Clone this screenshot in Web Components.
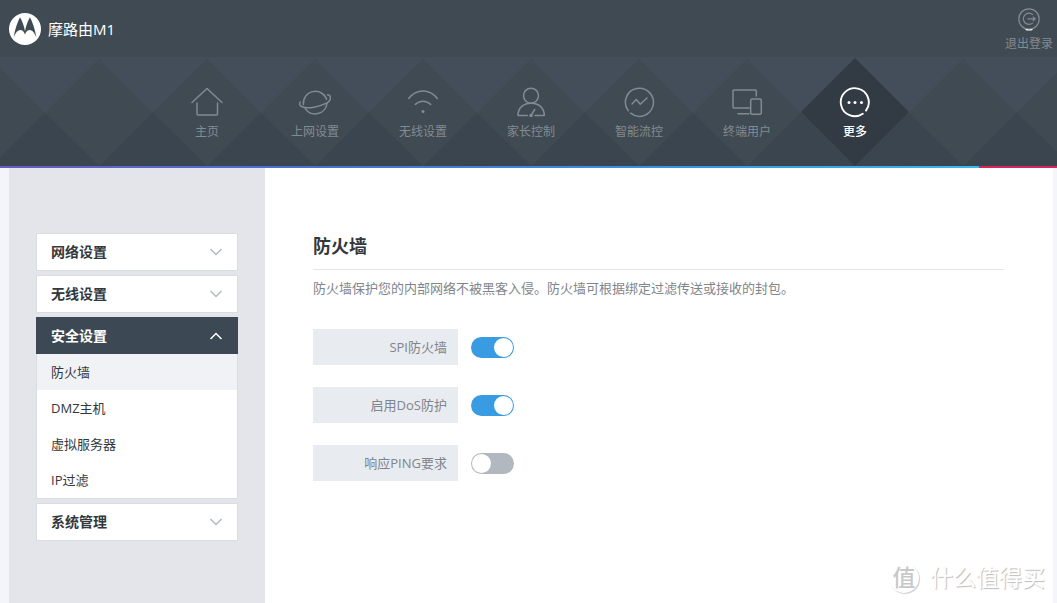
<!DOCTYPE html>
<html lang="zh-CN">
<head>
<meta charset="utf-8">
<meta name="viewport" content="width=device-width, initial-scale=1">
<title>摩路由M1</title>
<style>
  body {
    margin: 0;
    font: 13px/20px "Open Sans", "Noto Sans CJK SC", sans-serif;
    color: #33383d;
    background: #f4f5fa;
  }
</style>
</head>
<body>
<router-app>
  <app-header slot="header">摩路由M1</app-header>
  <main-nav slot="nav">
    <nav-item icon="home">主页</nav-item>
    <nav-item icon="planet">上网设置</nav-item>
    <nav-item icon="wifi">无线设置</nav-item>
    <nav-item icon="parent">家长控制</nav-item>
    <nav-item icon="flow">智能流控</nav-item>
    <nav-item icon="devices">终端用户</nav-item>
    <nav-item icon="more" active>更多</nav-item>
  </main-nav>
  <side-section slot="side" heading="网络设置"></side-section>
  <side-section slot="side" heading="无线设置"></side-section>
  <side-section slot="side" heading="安全设置" open>
    <side-link active>防火墙</side-link>
    <side-link>DMZ主机</side-link>
    <side-link>虚拟服务器</side-link>
    <side-link>IP过滤</side-link>
  </side-section>
  <side-section slot="side" heading="系统管理"></side-section>
  <settings-panel heading="防火墙">
    <span slot="description">防火墙保护您的内部网络不被黑客入侵。防火墙可根据绑定过滤传送或接收的封包。</span>
    <toggle-row checked>SPI防火墙</toggle-row>
    <toggle-row checked>启用DoS防护</toggle-row>
    <toggle-row>响应PING要求</toggle-row>
  </settings-panel>
  <site-mark slot="mark">什么值得买</site-mark>
</router-app>

<script>
const define = (name, render) => customElements.define(name, class extends HTMLElement {
  constructor() {
    super();
    this.attachShadow({ mode: "open" }).innerHTML = render(this);
  }
});

const icons = {
  home: `<path d="M1 16.5 16 2.5l15 14M6 17v11q0 1 1 1h18.5q1 0 1-1V17"/>`,
  planet: `<path d="M4.400 18.600A12 12 0 0 1 27.600 13.200M6.200 22.600A12 12 0 0 0 28 17.500"/><path d="M1.200 16C.2 18.300.9 20 3 20.800c6.500 2.600 18-.4 24.500-3.600C31.500 15 32 12.500 31 10c-.5-1-1.500-1.200-2.500-1.200"/>`,
  wifi: `<path d="M1.700 12.500C9.500 2.500 22.500 2.500 30.300 12.500M8.300 18.500c4.400-4.500 11-4.500 15.400 0"/><circle cx="16" cy="25.500" r="1.500" fill="currentColor" stroke="none"/>`,
  parent: `<circle cx="16" cy="9.700" r="7.500"/><path d="M12.300 29.500H3C3 21.500 8.500 17.200 16 17.200s13.300 4.300 13.300 12.300H20M16 29.500l3.700-6"/><circle cx="16" cy="29.500" r="1.800" fill="currentColor" stroke="none"/>`,
  flow: `<path d="M5.200 24.700A14 14 0 1 1 7.600 27.200M9 18l4.300-4.500 4 4.800L24 12"/>`,
  devices: `<path d="M25.300 10V5q0-1-1-1H3Q2 4 2 5v16q0 1 1 1h15.300M7 27.700h11"/><rect x="19.700" y="13" width="10.600" height="15.300" rx="1.500"/>`,
  more: `<path stroke-width="1.900" d="M23.800 27.700A14 14 0 1 1 27 24.600"/><g fill="currentColor" stroke="none"><circle cx="10" cy="16.500" r="1.500"/><circle cx="16" cy="16.500" r="1.500"/><circle cx="22.500" cy="16.500" r="1.500"/></g>`
};

define("router-app", () => `
  <style>
    :host { display: flex; flex-direction: column; min-height: 100vh; position: relative; }
    .body { flex: 1; display: grid; grid-template-columns: 256px 1fr; margin: 0 4px 0 9px; background: #fff; }
    aside { display: flex; flex-direction: column; gap: 4px; padding: 65px 27px; background: #e4e5ea; }
    main { padding: 65px 49px 40px 48px; }
  </style>
  <slot name="header"></slot>
  <slot name="nav"></slot>
  <div class="body">
    <aside><slot name="side"></slot></aside>
    <main><slot></slot></main>
  </div>
  <slot name="mark"></slot>`);

define("app-header", () => `
  <style>
    :host { display: flex; justify-content: space-between; height: 57px; padding: 0 4px 0 9px; background: #404a53; color: #fff; }
    .brand { display: flex; align-items: center; gap: 7px; font-size: 15px; }
    .brand svg { width: 32px; height: 32px; }
    .logout { display: flex; flex-direction: column; align-items: center; gap: 5px; padding-top: 8px; color: #838b92; font-size: 12px; line-height: 16px; text-decoration: none; }
    .logout svg { width: 22px; height: 23px; }
  </style>
  <div class="brand">
    <svg viewBox="0 0 32 32" aria-hidden="true"><circle cx="16" cy="16" r="16" fill="#fff"/><path fill="#404a53" d="M4.700 24.300C6 16 8.500 9 11 4.300 13.300 8 15 13 16 18.300 17 13 18.700 8 21 4.300 23.500 9 26 16 27.300 24.300 25.500 19.500 23 17 20.800 17s-4.200 2-4.800 4.700C15.400 19 13.400 17 11.200 17S6.500 19.500 4.700 24.300Z"/></svg>
    <span><slot></slot></span>
  </div>
  <a class="logout" href="#logout">
    <svg viewBox="0 0 22 23" fill="none" stroke="currentColor" stroke-width="1.200" aria-hidden="true"><circle cx="11" cy="11" r="10.200"/><path d="M14.800 6.700A5.600 5.600 0 1 0 14.800 14.900M9.500 10.800h7.500M14.800 8.600l2.400 2.200-2.400 2.200"/><path stroke="#fff" d="M7.500 21.500q3.500 1 7 0"/></svg>
    退出登录
  </a>`);

define("main-nav", () => `
  <style>
    :host {
      display: block;
      border-bottom: 2px solid;
      border-image: linear-gradient(90deg, #685cc0, #4a72d0 30%, #3796e0 65%, #3fc0f0) 1;
      position: relative;
    }
    nav {
      display: flex; justify-content: center; height: 109px; padding-left: 5px;
      background: conic-gradient(from -45deg, #444e5a 90deg, #3f4a53 0 180deg, #3b4550 0 270deg, #3f4a53 0) calc(50% + 54px) 1px / 108px 108px repeat-x content-box border-box #444e5a;
    }
    .accent { position: absolute; right: 0; bottom: -2px; width: 78px; height: 2px; background: #d8235d; }
  </style>
  <nav><slot></slot></nav>
  <div class="accent"></div>`);

define("nav-item", el => `
  <style>
    :host { display: block; width: 108px; color: #838b92; }
    :host([active]) { color: #fff; }
    a { display: flex; flex-direction: column; align-items: center; gap: 6px; height: 108px; margin-top: 1px; padding-top: 28px; box-sizing: border-box; color: inherit; font-size: 12px; line-height: 16px; text-decoration: none; }
    :host([active]) a { background: #323a43; clip-path: polygon(50% 0, 100% 50%, 50% 100%, 0 50%); font-weight: 500; }
    svg { width: 32px; height: 32px; }
  </style>
  <a href="#${el.getAttribute("icon")}">
    <svg viewBox="0 0 32 32" fill="none" stroke="currentColor" stroke-width="1.500" stroke-linecap="round" stroke-linejoin="round" aria-hidden="true">${icons[el.getAttribute("icon")]}</svg>
    <span><slot></slot></span>
  </a>`);

define("side-section", el => `
  <style>
    :host { display: block; border: 1px solid #d9dce1; background: #fff; }
    :host([open]) { border-top: 0; }
    button { display: flex; align-items: center; justify-content: space-between; width: 100%; height: 36px; padding: 0 15px 0 14px; border: 0; background: none; font: bold 14px/20px "Open Sans", "Noto Sans CJK SC", sans-serif; color: #33383d; cursor: pointer; }
    :host([open]) button { width: calc(100% + 2px); height: 37px; margin: 0 -1px; padding: 0 16px 0 15px; background: #3c4954; color: #fff; }
    svg { width: 12px; height: 8px; stroke: #b4bac1; }
    :host([open]) svg { stroke: #fff; transform: rotate(180deg); }
  </style>
  <button type="button" aria-expanded="${el.hasAttribute("open")}">
    <span>${el.getAttribute("heading")}</span>
    <svg viewBox="0 0 12 8" fill="none" stroke-width="1.500" aria-hidden="true"><path d="m.5 1 5.500 5.500L11.500 1"/></svg>
  </button>
  <slot></slot>`);

define("side-link", () => `
  <style>
    :host { display: block; }
    :host([active]) { background: #f1f2f6; }
    a { display: block; padding: 8px 14px; color: inherit; text-decoration: none; }
  </style>
  <a href="#section"><slot></slot></a>`);

define("settings-panel", el => `
  <style>
    :host { display: block; }
    h1 { margin: 0; padding-bottom: 10px; border-bottom: 1px solid #e5e7eb; font-size: 18px; line-height: 26px; }
    p { margin: 8px 0 31px; color: #7f858c; }
    form { display: grid; gap: 22px; }
  </style>
  <h1>${el.getAttribute("heading")}</h1>
  <p><slot name="description"></slot></p>
  <form><slot></slot></form>`);

define("toggle-row", el => `
  <style>
    :host { display: flex; align-items: center; gap: 13px; color: #7f858c; }
    label { box-sizing: border-box; width: 145px; padding: 8px 11px; background: #e8ebf0; text-align: right; }
    input { appearance: none; width: 43px; height: 21px; margin: 0; padding: 1px; box-sizing: border-box; display: flex; border-radius: 11px; background: #b1b8c0; cursor: pointer; }
    input::before { content: ""; width: 19px; height: 19px; border-radius: 50%; background: #fff; }
    input:checked { justify-content: flex-end; background: #399ce3; }
  </style>
  <label for="switch"><slot></slot></label>
  <input id="switch" type="checkbox" role="switch" ${el.hasAttribute("checked") ? "checked" : ""}>`);

define("site-mark", () => `
  <style>
    :host { position: absolute; right: 12px; bottom: 11px; display: flex; align-items: center; gap: 11px; color: #fff; font-size: 23px; line-height: 32px; text-shadow: 1px 1px 1px #bbb; pointer-events: none; }
    .seal { box-sizing: border-box; width: 30px; height: 30px; border-radius: 50%; box-shadow: 1px 1px 1px #ccc; text-align: center; line-height: 28px; color: #c8c8c8; text-shadow: none; font-weight: 500; }
    .name { padding-bottom: 2px; }
  </style>
  <span class="seal">值</span>
  <span class="name"><slot></slot></span>`);
</script>
</body>
</html>
